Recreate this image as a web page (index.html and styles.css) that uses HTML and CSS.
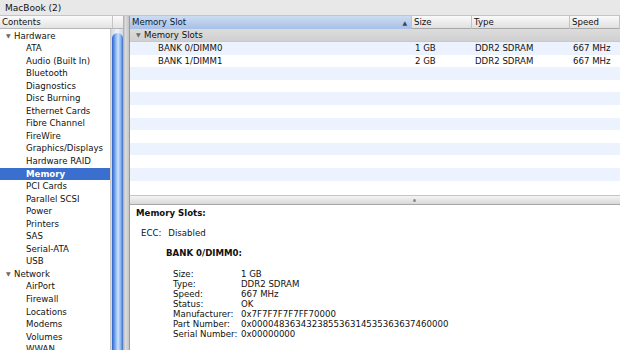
FILE: index.html
```html
<!DOCTYPE html>
<html lang="en">
<head>
    <meta charset="UTF-8">
    <title>System Profiler</title>
    <link rel="stylesheet" href="styles.css">
</head>
<body>
    <div class="titlebar">MacBook (2)</div>
    <div class="window">
        <div class="sidebar">
            <div class="side-head">
                <span class="side-title">Contents</span>
                <span class="side-extra"></span>
            </div>
            <div class="side-body">
                <ul class="tree">
                    <li class="group"><span class="tri">&#9660;</span>Hardware</li>
                    <li>ATA</li>
                    <li>Audio (Built In)</li>
                    <li>Bluetooth</li>
                    <li>Diagnostics</li>
                    <li>Disc Burning</li>
                    <li>Ethernet Cards</li>
                    <li>Fibre Channel</li>
                    <li>FireWire</li>
                    <li>Graphics/Displays</li>
                    <li>Hardware RAID</li>
                    <li class="selected">Memory</li>
                    <li>PCI Cards</li>
                    <li>Parallel SCSI</li>
                    <li>Power</li>
                    <li>Printers</li>
                    <li>SAS</li>
                    <li>Serial-ATA</li>
                    <li>USB</li>
                    <li class="group"><span class="tri">&#9660;</span>Network</li>
                    <li>AirPort</li>
                    <li>Firewall</li>
                    <li>Locations</li>
                    <li>Modems</li>
                    <li>Volumes</li>
                    <li>WWAN</li>
                </ul>
                <div class="scrollbar">
                    <div class="thumb"></div>
                </div>
            </div>
        </div>
        <div class="divider"></div>
        <div class="content">
            <div class="table">
                <div class="thead">
                    <div class="th sorted">Memory Slot<span class="sort">&#9650;</span></div>
                    <div class="th">Size</div>
                    <div class="th">Type</div>
                    <div class="th">Speed</div>
                </div>
                <div class="grouprow"><span class="tri">&#9660;</span>Memory Slots</div>
                <div class="rows">
                    <div class="row"><span class="c1">BANK 0/DIMM0</span><span>1 GB</span><span>DDR2 SDRAM</span><span>667 MHz</span></div>
                    <div class="row"><span class="c1">BANK 1/DIMM1</span><span>2 GB</span><span>DDR2 SDRAM</span><span>667 MHz</span></div>
                    <div class="row"></div>
                    <div class="row"></div>
                    <div class="row"></div>
                    <div class="row"></div>
                    <div class="row"></div>
                    <div class="row"></div>
                    <div class="row"></div>
                    <div class="row"></div>
                    <div class="row"></div>
                    <div class="row"></div>
                </div>
            </div>
            <div class="splitter"><span class="dimple"></span></div>
            <div class="details">
                <div class="d-title">Memory Slots:</div>
                <div class="ecc"><span>ECC:</span><span>Disabled</span></div>
                <div class="bank">
                    <div class="d-title">BANK 0/DIMM0:</div>
                    <dl class="props">
                        <dt>Size:</dt><dd>1 GB</dd>
                        <dt>Type:</dt><dd>DDR2 SDRAM</dd>
                        <dt>Speed:</dt><dd>667 MHz</dd>
                        <dt>Status:</dt><dd>OK</dd>
                        <dt>Manufacturer:</dt><dd>0x7F7F7F7F7FF70000</dd>
                        <dt>Part Number:</dt><dd>0x000048363432385536314535363637460000</dd>
                        <dt>Serial Number:</dt><dd>0x00000000</dd>
                    </dl>
                </div>
            </div>
        </div>
    </div>
</body>
</html>
```

FILE: styles.css
```css
body {
    margin: 0;
    width: 620px;
    height: 350px;
    overflow: hidden;
    font-family: "DejaVu Sans", sans-serif;
    font-size: 8.6px;
    color: #111;
    background-color: #e9e9e9;
}
.titlebar {
    height: 16px;
    line-height: 16px;
    padding-left: 5px;
    font-size: 9px;
    background-color: #e8e8e8;
    border-bottom: 1px solid #c4c4c4;
    box-sizing: border-box;
}
.window {
    display: flex;
    height: 334px;
}
.sidebar {
    width: 123px;
    display: flex;
    flex-direction: column;
    background: white;
}
.side-head {
    display: flex;
    height: 13px;
    line-height: 13px;
    background: linear-gradient(#fbfbfb, #e3e3e3);
    border-bottom: 1px solid #b5b5b5;
    box-sizing: border-box;
}
.side-title {
    width: 110px;
    padding-left: 2px;
    border-right: 1px solid #c4c4c4;
}
.side-extra {
    flex: 1;
}
.side-body {
    flex: 1;
    display: flex;
    overflow: hidden;
}
.tree {
    list-style: none;
    margin: 0;
    padding: 0;
    width: 110px;
    padding-top: 0.5px;
}
.tree li {
    height: 12.56px;
    line-height: 12.56px;
    padding-left: 26px;
    white-space: nowrap;
}
.tree li.group {
    padding-left: 6px;
}
.tri {
    display: inline-block;
    font-size: 6px;
    color: #6b6b6b;
    width: 8px;
    vertical-align: 1px;
}
.tree li.selected {
    background-color: #3a6fd0;
    color: white;
    font-weight: bold;
}
.scrollbar {
    width: 13px;
    background: linear-gradient(90deg, #cfd9e6, #f2f4f7 50%, #cfd9e6);
    border-left: 1px solid #c8c8c8;
    padding-top: 4px;
    box-sizing: border-box;
}
.thumb {
    margin: 0 auto;
    width: 11px;
    height: 400px;
    border-radius: 6px 6px 0 0;
    background: linear-gradient(90deg, #2a5fc7, #7eaef0 30%, #cfe2fb 55%, #86b3ee 80%, #3b6dc8);
}
.divider {
    width: 6px;
    background: linear-gradient(90deg, #a9a9a9, #dcdcdc 40%, #c4c4c4);
}
.content {
    flex: 1;
    display: flex;
    flex-direction: column;
    border-left: 1px solid #9a9a9a;
    background: white;
}
.table {
    height: 179px;
    overflow: hidden;
}
.thead {
    display: grid;
    grid-template-columns: 282px 60px 98px 1fr;
    height: 13px;
    line-height: 13px;
    background: linear-gradient(#fafafa, #e0e0e0);
    border-bottom: 1px solid #a8a8a8;
    box-sizing: border-box;
}
.th {
    padding-left: 2px;
    border-right: 1px solid #c2c2c2;
}
.th.sorted {
    display: flex;
    justify-content: space-between;
    background: linear-gradient(#cddcf2, #a7c0e6);
    color: #0d1a33;
}
.sort {
    font-size: 6px;
    color: #345;
    padding-right: 4px;
}
.grouprow {
    height: 12px;
    line-height: 12px;
    padding-left: 6px;
    background: linear-gradient(#dcdcdc, #d0d0d0);
    border-bottom: 1px solid #c8c8c8;
}
.row {
    display: grid;
    grid-template-columns: 282px 60px 98px 1fr;
    height: 12.6px;
    line-height: 12.6px;
}
.row:nth-child(odd) {
    background-color: #edf3fe;
}
.row span {
    padding-left: 3px;
}
.row .c1 {
    padding-left: 28px;
}
.splitter {
    height: 8px;
    background: linear-gradient(#f4f4f4, #d8d8d8);
    border-top: 1px solid #b9c9dd;
    border-bottom: 1px solid #a8a8a8;
    display: flex;
    align-items: center;
    padding-left: 283px;
}
.dimple {
    width: 3px;
    height: 3px;
    border-radius: 50%;
    background: #8a8a8a;
}
.details {
    flex: 1;
    padding: 2px 6px;
}
.d-title {
    font-weight: bold;
    line-height: 12px;
}
.ecc {
    display: flex;
    gap: 7px;
    margin-top: 8px;
    padding-left: 5px;
    line-height: 12px;
}
.bank {
    margin-top: 8px;
    padding-left: 30px;
}
.props {
    display: grid;
    grid-template-columns: 68px 1fr;
    margin: 10px 0 0 7px;
    line-height: 10px;
}
.props dt, .props dd {
    margin: 0;
}
```
